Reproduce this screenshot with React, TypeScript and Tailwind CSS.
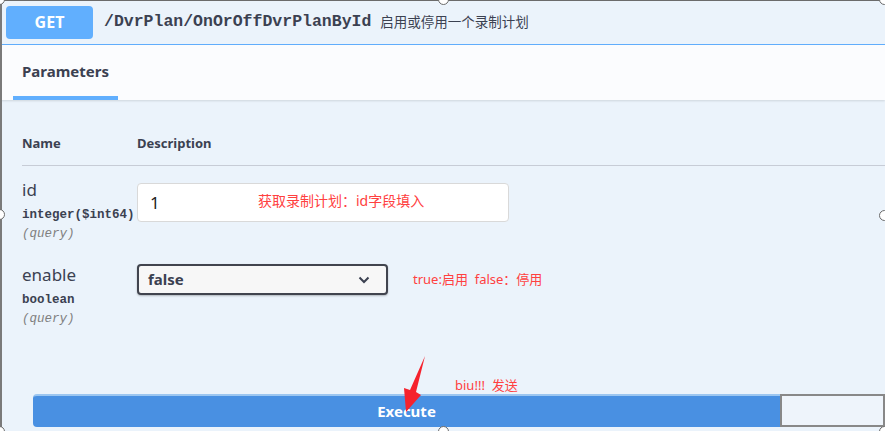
const sans = "font-['Noto_Sans','Noto_Sans_CJK_SC',sans-serif]";
const mono = "font-['Liberation_Mono','Noto_Sans_CJK_SC',monospace]";

type ParamRow = {
  name: string;
  type: string;
};

const Handle = ({ className }: { className: string }) => (
  <div
    className={`absolute w-[11px] h-[11px] rounded-full bg-white border border-[#6b6b6b] ${className}`}
  />
);

const ParamName = ({ name, type }: ParamRow) => (
  <div className="w-[115px] shrink-0">
    <div className="text-[17px] leading-[20px] text-[#3b4151]">{name}</div>
    <div className={`${mono} mt-[7px] text-[12.5px] leading-[16px] font-bold text-[#3b4151]`}>
      {type}
    </div>
    <div className={`${mono} mt-[3px] text-[12.5px] leading-[16px] italic text-[#808080]`}>
      (query)
    </div>
  </div>
);

const App = () => {
  return (
    <div
      className={`${sans} relative w-[885px] h-[431px] overflow-hidden bg-[#ebf3fb] text-[#3b4151]`}>
      {/* summary bar */}
      <div className="flex items-center h-[45px] pl-[6px] border-b border-[#61affe]">
        <div className="flex items-center justify-center w-[87px] h-[33px] rounded-[4px] bg-[#61affe] text-white text-[16px] font-bold">
          GET
        </div>
        <span className={`${mono} ml-[11px] text-[16.5px] font-bold text-[#3b4151]`}>
          /DvrPlan/OnOrOffDvrPlanById
        </span>
        <span className="ml-[9px] text-[13.5px] text-[#3b4151]">启用或停用一个录制计划</span>
      </div>

      {/* tab header */}
      <div className="flex h-[55px] pl-[13px] bg-[#fbfcfe] shadow-[0_1px_2px_rgba(0,0,0,0.12)]">
        <div className="flex flex-col w-[105px]">
          <div className="flex-1 flex items-center pl-[9px] pt-[2px] text-[15px] font-bold">
            Parameters
          </div>
          <div className="h-[4px] bg-[#61affe]" />
        </div>
      </div>

      {/* parameters table */}
      <div className="pl-[22px] pt-[32px]">
        <div className="flex items-center h-[34px] pb-[10px] border-b border-[#c7ccd6] text-[13px] font-bold">
          <div className="w-[115px]">Name</div>
          <div>Description</div>
        </div>

        <div className="flex pt-[14px]">
          <ParamName name="id" type="integer($int64)" />
          <div className="relative mt-[3px] w-[372px] h-[39px] rounded-[4px] border border-[#d9d9d9] bg-white flex items-center pl-[12px] text-[17px] text-[#222]">
            1
            <span className="absolute left-[120px] top-[6px] text-[14px] text-[#ff4040]">
              获取录制计划：id字段填入
            </span>
          </div>
        </div>

        <div className="flex pt-[23px]">
          <ParamName name="enable" type="boolean" />
          <div className="flex items-start">
            <div className="mt-[-1px] flex items-center justify-between w-[251px] h-[31px] rounded-[4px] border-2 border-[#41444e] bg-[#f7f7f7] shadow-[0_1px_2px_rgba(0,0,0,0.25)] pl-[9px] pr-[16px]">
              <span className="text-[15px] font-bold">false</span>
              <svg width="12" height="8" viewBox="0 0 12 8" fill="none">
                <path d="M1.5 1.5 6 6l4.5-4.5" stroke="#3b4151" strokeWidth="2" />
              </svg>
            </div>
            <span className="ml-[25px] mt-[5px] text-[13px] text-[#ff4040] whitespace-pre">
              true:启用  false：停用
            </span>
          </div>
        </div>
      </div>

      {/* execute */}
      <div className="flex mt-[67px] pl-[33px]">
        <button className="w-[747px] h-[33px] rounded-l-[4px] bg-[#4990e2] border-t-2 border-[#9cc6f0] text-white text-[15px] font-bold">
          Execute
        </button>
        <div className="flex-1 h-[33px] border-2 border-[#888] bg-[#eef4fb]" />
      </div>

      {/* annotations */}
      <span className="absolute left-[455px] top-[376px] text-[13px] text-[#ff4040] whitespace-pre">
        biu!!!  发送
      </span>
      <svg className="absolute left-0 top-0" width="885" height="431">
        <polygon points="425,356 416,392 421,395 406,412 404,388 410,390" fill="#f5222d" />
      </svg>

      {/* capture frame */}
      <div className="absolute left-0 top-0 w-full h-[1px] bg-[#6b6b6b]" />
      <div className="absolute left-0 top-0 w-[2px] h-full bg-[#7a7a7a]" />
      <Handle className="left-[-6px] top-[-6px]" />
      <Handle className="left-[438px] top-[-6px]" />
      <Handle className="left-[879px] top-[-6px]" />
      <Handle className="left-[-6px] top-[209px]" />
      <Handle className="left-[879px] top-[210px]" />
      <Handle className="left-[-6px] top-[426px]" />
      <Handle className="left-[438px] top-[426px]" />
      <Handle className="left-[879px] top-[426px]" />
    </div>
  );
};

export default App;
